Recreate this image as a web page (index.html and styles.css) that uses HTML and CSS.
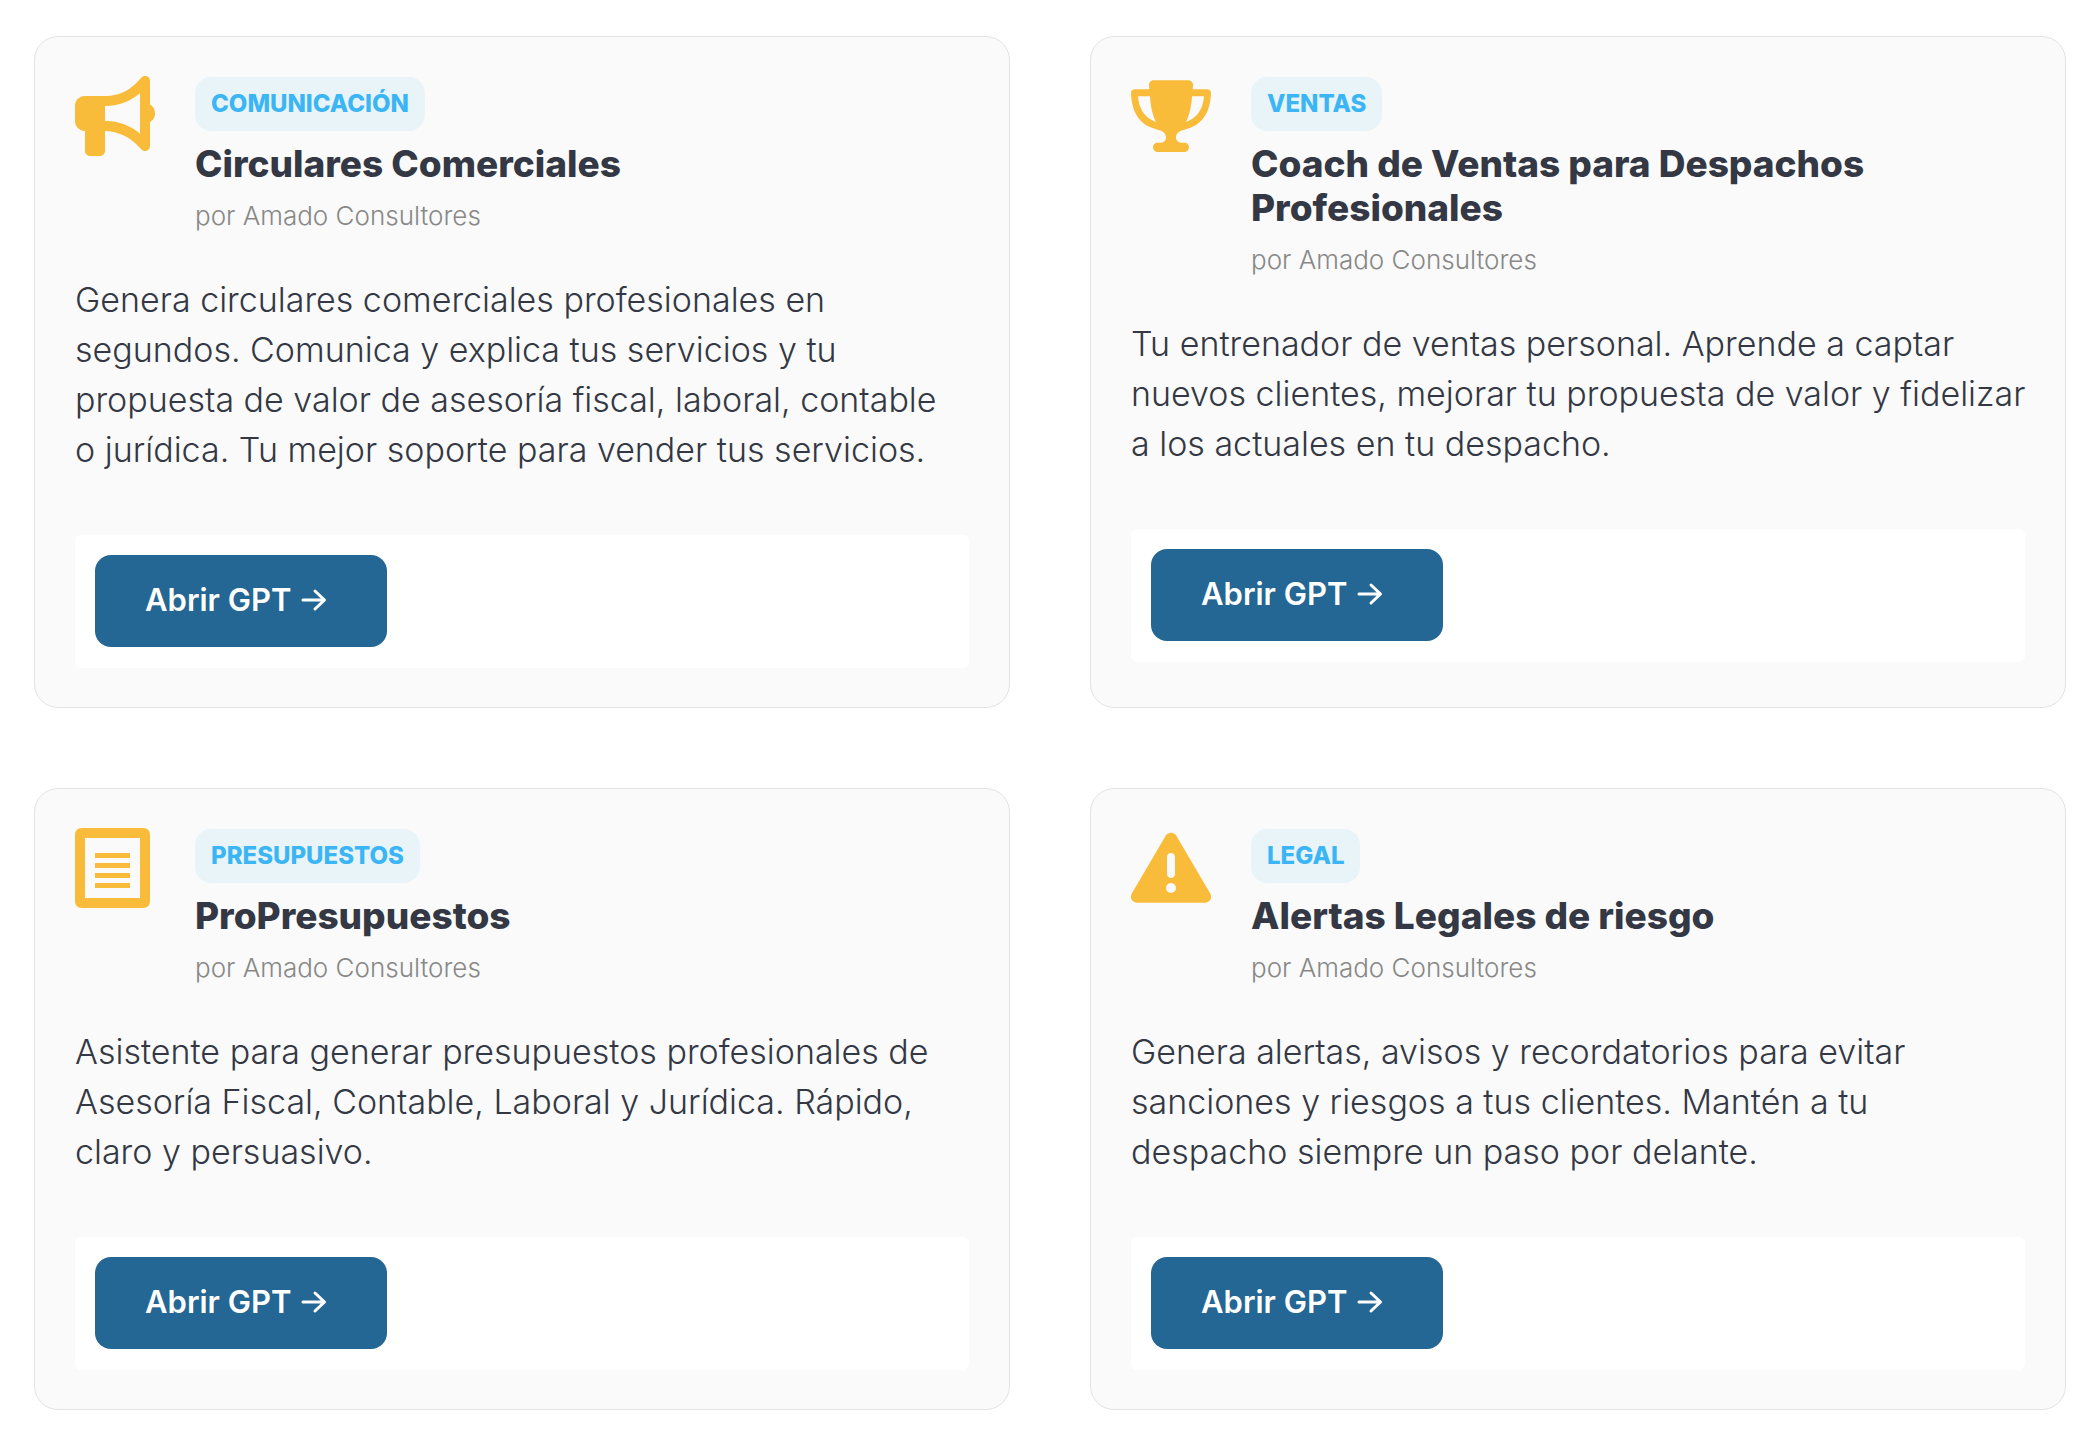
FILE: index.html
```html
<!DOCTYPE html>
<html lang="es">
<head>
<meta charset="utf-8">
<meta name="viewport" content="width=device-width, initial-scale=1">
<title>GPTs de Amado Consultores</title>
<link rel="stylesheet" href="styles.css">
</head>
<body>
<svg class="sprite" aria-hidden="true">
  <symbol id="arrow" viewBox="0 0 26 24">
    <path d="M2 12h21M14 3l9.500 9-9.500 9" fill="none" stroke="currentColor" stroke-width="3" stroke-linecap="round" stroke-linejoin="round"/>
  </symbol>
</svg>
<main class="grid">
  <article class="card">
    <header class="head">
      <svg class="icon" viewBox="30 30 240 240" aria-hidden="true">
        <path fill-rule="evenodd" d="M255 45V116C264 120 270 130 270 142S264 164 255 168V240C255 246 252 251 246 254C240 256 234 255 230 251L214 235C190 211 158 197 124 195H120V255C120 263 113 270 105 270H75C67 270 60 263 60 255V195C43 195 30 182 30 165V120C30 103 43 90 60 90H124C158 90 190 75 214 51L230 34C234 30 240 29 246 31C252 34 255 39 255 45ZM225 82C197 106 161 120 124 120H120V165H124C161 165 197 179 225 203Z"/>
      </svg>
      <div class="heading">
        <span class="badge">COMUNICACIÓN</span>
        <h2 class="title">Circulares Comerciales</h2>
        <p class="author">por Amado Consultores</p>
      </div>
    </header>
    <p class="text">Genera circulares comerciales profesionales en segundos. Comunica y explica tus servicios y tu propuesta de valor de asesoría fiscal, laboral, contable o&nbsp;jurídica. Tu mejor soporte para vender tus servicios.</p>
    <footer class="actions"><a class="button" href="#circulares">Abrir GPT<svg class="arrow" aria-hidden="true"><use href="#arrow"/></svg></a></footer>
  </article>

  <article class="card">
    <header class="head">
      <svg class="icon" viewBox="30 30 240 240" aria-hidden="true">
        <path fill-rule="evenodd" d="M98 43H202C210 43 217 50 216 58L215 70H259C265 70 270 75 270 81C268 139 244 168 218 181C204 188 192 191 184 193C172 197 165 205 165 214C165 224 172 230 181 230H191C198 230 204 236 204 244S198 258 191 258H109C102 258 96 252 96 244S102 230 109 230H119C128 230 135 224 135 214C135 205 128 197 116 193C108 191 96 188 82 181C56 168 32 139 30 81C30 75 35 70 41 70H85L84 58C83 50 90 43 98 43ZM51 91C54 132 73 156 105 168C95 149 89 123 87 91ZM213 91C211 123 205 149 195 168C227 156 246 132 249 91Z"/>
      </svg>
      <div class="heading">
        <span class="badge">VENTAS</span>
        <h2 class="title">Coach de Ventas para Despachos Profesionales</h2>
        <p class="author">por Amado Consultores</p>
      </div>
    </header>
    <p class="text">Tu entrenador de ventas personal. Aprende a captar nuevos clientes, mejorar tu propuesta de valor y fidelizar a los actuales en tu despacho.</p>
    <footer class="actions"><a class="button" href="#ventas">Abrir GPT<svg class="arrow" aria-hidden="true"><use href="#arrow"/></svg></a></footer>
  </article>

  <article class="card">
    <header class="head">
      <svg class="icon" viewBox="0 0 80 80" aria-hidden="true">
        <path fill-rule="evenodd" d="M7 0H68Q75 0 75 7V73Q75 80 68 80H7Q0 80 0 73V7Q0 0 7 0ZM10 10V70H65V10ZM20 25H55V30H20ZM20 35H55V40H20ZM20 45H55V50H20ZM20 55H55V60H20Z"/>
      </svg>
      <div class="heading">
        <span class="badge">PRESUPUESTOS</span>
        <h2 class="title">ProPresupuestos</h2>
        <p class="author">por Amado Consultores</p>
      </div>
    </header>
    <p class="text">Asistente para generar presupuestos profesionales de Asesoría Fiscal, Contable, Laboral y Jurídica. Rápido, claro y persuasivo.</p>
    <footer class="actions"><a class="button" href="#presupuestos">Abrir GPT<svg class="arrow" aria-hidden="true"><use href="#arrow"/></svg></a></footer>
  </article>

  <article class="card">
    <header class="head">
      <svg class="icon" viewBox="30 24 240 240" aria-hidden="true">
        <path fill-rule="evenodd" d="M150 38C157 38 163 42 166 47L268 221C271 227 271 233 268 239C264 245 258 248 252 248H48C42 248 36 245 32 239C29 233 29 227 32 221L134 47C137 42 143 38 150 38ZM150 99C144 99 138 104 138 110V163C138 169 144 174 150 174S162 169 162 163V110C162 104 156 99 150 99ZM165 204A15 15 0 1 0 135 204A15 15 0 1 0 165 204Z"/>
      </svg>
      <div class="heading">
        <span class="badge">LEGAL</span>
        <h2 class="title">Alertas Legales de riesgo</h2>
        <p class="author">por Amado Consultores</p>
      </div>
    </header>
    <p class="text">Genera alertas, avisos y recordatorios para evitar sanciones y riesgos a tus clientes. Mantén a tu despacho siempre un paso por delante.</p>
    <footer class="actions"><a class="button" href="#legal">Abrir GPT<svg class="arrow" aria-hidden="true"><use href="#arrow"/></svg></a></footer>
  </article>
</main>
</body>
</html>
```
FILE: styles.css
```css
* {
  box-sizing: border-box;
}

body {
  margin: 0;
  background: #fff;
  color: #333844;
  font-family: Inter, "Open Sans", sans-serif;
}

.sprite {
  display: none;
}

.grid {
  display: grid;
  grid-template-columns: repeat(2, minmax(0, 1fr));
  gap: 80px;
  padding: 36px 32px 40px 34px;
}

.card {
  padding: 39px 40px;
  border: 1px solid #e3e3e3;
  border-radius: 24px;
  background: #fafafa;
}

.head {
  display: flex;
  gap: 40px;
  margin-bottom: 38px;
}

.icon {
  flex: none;
  width: 80px;
  height: 80px;
  fill: #f9bc3a;
}

.heading {
  min-width: 0;
  padding-top: 1px;
}

.badge {
  display: block;
  width: fit-content;
  margin-bottom: 11px;
  padding: 0 16px;
  border-radius: 16px;
  background: #e8f4f8;
  color: #3cb5f5;
  font-size: 24px;
  font-weight: 800;
  line-height: 54px;
}

.title {
  margin: 0 0 9px;
  font-size: 37px;
  font-weight: 800;
  line-height: 44px;
}

.author {
  margin: 0;
  color: #888;
  font-size: 26px;
  font-weight: 300;
  line-height: 42px;
}

.text {
  margin: 0 -4px 60px 0;
  font-size: 34px;
  font-weight: 300;
  line-height: 50px;
}

.actions {
  display: flex;
  padding: 20px 20px 21px;
  border-radius: 6px;
  background: #fff;
}

.button {
  display: flex;
  align-items: center;
  gap: 10px;
  padding: 0 60px 2px 50px;
  border-radius: 16px;
  background: #246694;
  color: #fff;
  font-size: 31px;
  font-weight: 600;
  line-height: 90px;
  text-decoration: none;
}

.arrow {
  width: 26px;
  height: 24px;
}
```
